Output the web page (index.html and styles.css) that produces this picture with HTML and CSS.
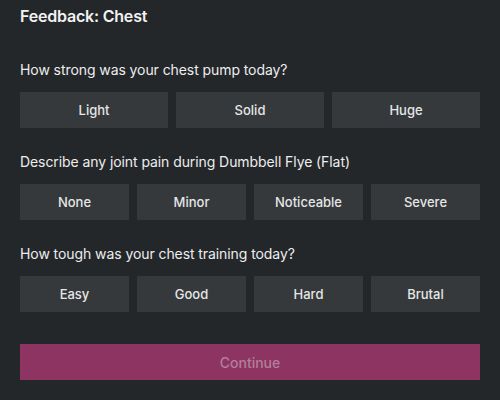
FILE: index.html
```html
<!DOCTYPE html>
<html>
<head>
<meta charset="utf-8">
<link rel="stylesheet" href="styles.css">
</head>
<body>
<div class="page">
  <h1 class="title">Feedback: Chest</h1>
  <section class="group first">
    <p class="question">How strong was your chest pump today?</p>
    <div class="options three">
      <button class="opt">Light</button>
      <button class="opt">Solid</button>
      <button class="opt">Huge</button>
    </div>
  </section>
  <section class="group">
    <p class="question">Describe any joint pain during Dumbbell Flye (Flat)</p>
    <div class="options four">
      <button class="opt">None</button>
      <button class="opt">Minor</button>
      <button class="opt">Noticeable</button>
      <button class="opt">Severe</button>
    </div>
  </section>
  <section class="group">
    <p class="question">How tough was your chest training today?</p>
    <div class="options four">
      <button class="opt">Easy</button>
      <button class="opt">Good</button>
      <button class="opt">Hard</button>
      <button class="opt">Brutal</button>
    </div>
  </section>
  <button class="continue">Continue</button>
</div>
</body>
</html>
```
FILE: styles.css
```css
* { box-sizing: border-box; }
html, body {
  margin: 0;
  padding: 0;
  background: #24272a;
  font-family: Inter, "Noto Sans", sans-serif;
  color: #ececec;
}
.page {
  width: 500px;
  height: 400px;
  padding: 6px 20px 0 20px;
  display: flex;
  flex-direction: column;
}
.title {
  margin: 0;
  font-size: 16px;
  line-height: 20px;
  font-weight: 600;
  letter-spacing: -0.2px;
  color: #f2f2f2;
}
.group {
  display: flex;
  flex-direction: column;
  gap: 12px;
  margin-top: 24px;
}
.group.first { margin-top: 34px; }
.question {
  margin: 0;
  font-size: 14px;
  line-height: 20px;
  font-weight: 400;
  letter-spacing: -0.08px;
  color: #ededed;
}
.options {
  display: grid;
  gap: 8px;
}
.options.three { grid-template-columns: repeat(3, 1fr); }
.options.four { grid-template-columns: repeat(4, 1fr); }
.opt {
  height: 36px;
  border: none;
  border-radius: 0;
  background: #35393b;
  color: #e6e6e6;
  font-family: inherit;
  font-size: 13px;
  font-weight: 500;
  padding: 0;
}
.continue {
  margin-top: 32px;
  height: 36px;
  border: none;
  border-radius: 0;
  background: #8e3462;
  color: #b37f9c;
  font-family: inherit;
  font-size: 14px;
  font-weight: 500;
  padding: 0;
}
```
